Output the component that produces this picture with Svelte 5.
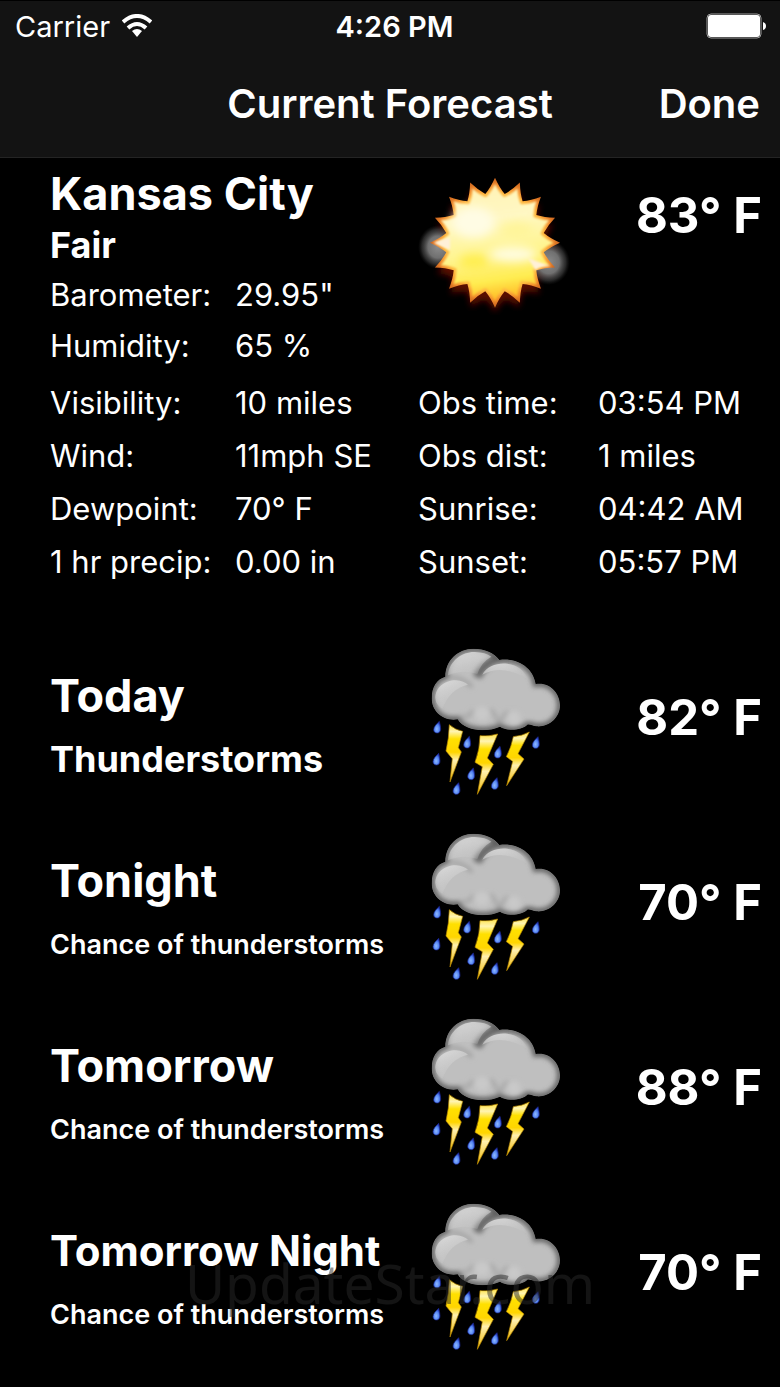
<script lang="ts">
  interface Reading {
    label: string;
    value: string;
  }

  interface Period {
    name: string;
    summary: string;
    temp: number;
  }

  const air: Reading[] = [
    { label: 'Barometer:', value: '29.95"' },
    { label: 'Humidity:', value: '65 %' }
  ];

  const ground: Reading[] = [
    { label: 'Visibility:', value: '10 miles' },
    { label: 'Wind:', value: '11mph SE' },
    { label: 'Dewpoint:', value: '70° F' },
    { label: '1 hr precip:', value: '0.00 in' }
  ];

  const station: Reading[] = [
    { label: 'Obs time:', value: '03:54 PM' },
    { label: 'Obs dist:', value: '1 miles' },
    { label: 'Sunrise:', value: '04:42 AM' },
    { label: 'Sunset:', value: '05:57 PM' }
  ];

  const periods: Period[] = [
    { name: 'Today', summary: 'Thunderstorms', temp: 82 },
    { name: 'Tonight', summary: 'Chance of thunderstorms', temp: 70 },
    { name: 'Tomorrow', summary: 'Chance of thunderstorms', temp: 88 },
    { name: 'Tomorrow Night', summary: 'Chance of thunderstorms', temp: 70 }
  ];

  const drops = [
    [82, 292], [172, 337], [80, 388], [140, 476],
    [184, 432], [264, 367], [255, 461], [378, 338]
  ];

  const cloud =
    'M106 140C106 90 145 56 190 56C225 56 252 68 268 90C325 82 370 115 377 162' +
    'C420 155 450 190 450 226C450 265 415 292 380 289C368 288 360 282 352 284' +
    'C335 302 290 304 270 290C230 308 165 305 143 268C100 275 65 245 65 205C65 170 80 148 106 140Z';

  // Sixteen-pointed star with slightly hollow edges
  function sunPath(tip: number, mid: number, valley: number) {
    const at = (r: number, turn: number) => {
      const a = (turn / 16) * Math.PI * 2 - Math.PI / 2;
      return `${(285 + r * Math.cos(a)).toFixed(1)} ${(233 + r * Math.sin(a)).toFixed(1)}`;
    };
    let d = `M${at(tip, 0)}`;
    for (let i = 0; i < 16; i++) {
      d += `Q${at(mid, i + 0.2)} ${at(valley, i + 0.5)}`;
      d += `Q${at(mid, i + 0.8)} ${at(tip, i + 1)}`;
    }
    return d + 'Z';
  }
</script>

{#snippet readings(items: Reading[], kind: string)}
  <dl class="readings {kind}">
    {#each items as item}
      <dt>{item.label}</dt>
      <dd>{item.value}</dd>
    {/each}
  </dl>
{/snippet}

<!-- Shared storm drawing, used once per forecast period -->
<svg class="sprite" aria-hidden="true">
  <defs>
    <linearGradient id="bolt" x1="0" y1="0" x2="0" y2="1">
      <stop offset="0" stop-color="#ffe34a" />
      <stop offset="0.12" stop-color="#fff4b0" />
      <stop offset="0.25" stop-color="#ffe000" />
      <stop offset="0.48" stop-color="#ffd500" />
      <stop offset="0.62" stop-color="#fff0b0" />
      <stop offset="1" stop-color="#f0b800" />
    </linearGradient>
    <radialGradient id="drop" cx="0.45" cy="0.65" r="0.6">
      <stop offset="0" stop-color="#8fb8ff" />
      <stop offset="0.6" stop-color="#5485f2" />
      <stop offset="1" stop-color="#2438b8" />
    </radialGradient>
    <linearGradient id="shine" x1="0.2" y1="0" x2="0.7" y2="1">
      <stop offset="0" stop-color="#dadada" />
      <stop offset="1" stop-color="#c4c4c4" stop-opacity="0.2" />
    </linearGradient>
    <filter id="soft" x="-20%" y="-20%" width="140%" height="140%">
      <feGaussianBlur stdDeviation="8" />
    </filter>
    <filter id="softer"><feGaussianBlur stdDeviation="2" /></filter>
    <clipPath id="cloud-shape"><path d={cloud} /></clipPath>
  </defs>
  <symbol id="storm" viewBox="24 45 456 459">
    <g clip-path="url(#cloud-shape)">
      <path d={cloud} fill="#bfbfbf" />
      <g filter="url(#soft)" fill="none">
        <path d="M104 142Q160 138 186 172" stroke="#9c9c9c" stroke-width="10" />
        <path d="M202 142Q216 100 272 84" stroke="#686868" stroke-width="26" />
        <path d="M140 262Q180 266 190 240M240 238Q262 256 266 292Q276 254 296 246" stroke="#a4a4a4" stroke-width="10" />
        <path d={cloud} stroke="#5c5c5c" stroke-width="17" />
      </g>
      <g fill="url(#shine)" filter="url(#softer)">
        <path d="M114 136C118 92 158 65 194 66Q226 67 244 80Q214 96 202 132Q160 116 114 136Z" />
        <path d="M217 134C230 108 262 98 292 101Q338 108 354 148Q276 100 217 134Z" />
        <path d="M76 205C76 170 108 150 138 151Q162 153 174 164Q120 176 97 236Q78 226 76 205Z" />
      </g>
      <g filter="url(#soft)" fill="#c9c9c9">
        <circle cx="216" cy="252" r="22" />
        <circle cx="312" cy="264" r="20" />
      </g>
    </g>
    <g fill="url(#bolt)" stroke="#b98a00" stroke-width="2" stroke-linejoin="round">
      <path d="M118 284Q136 300 158 304L145 353L154 366L120 456L127 386L108 363Q117 325 118 284Z" />
      <path d="M210 317Q238 320 263 312L232 384L250 403L202 493L217 410L195 397Q210 357 210 317Z" />
      <path d="M310 320Q336 318 358 306L324 371L342 387L290 467L308 394L289 380Q304 352 310 320Z" />
    </g>
    {#each drops as [x, y]}
      <path
        transform="translate({x} {y})"
        d="M6 -18C-2 -10 -11 -2 -11 7C-11 14 -6 17 0 17C6 17 10 12 10 5Q10 -4 6 -18Z"
        fill="url(#drop)"
        stroke="#1a2690"
        stroke-width="2"
      />
    {/each}
  </symbol>
</svg>

<div class="screen">
  <header>
    <div class="status">
      <div class="carrier">
        <span>Carrier</span>
        <svg width="30" height="24" viewBox="0 0 30 24" aria-hidden="true">
          <g fill="none" stroke="#fff" stroke-width="4">
            <path d="M1 8Q15 -4 29 8" />
            <path d="M6 14Q15 6 24 14" />
          </g>
          <path d="M10 17Q15 13 20 17L15 23Z" fill="#fff" />
        </svg>
      </div>
      <time>4:26 PM</time>
      <svg class="battery" width="60" height="26" viewBox="0 0 60 26" aria-hidden="true">
        <rect x="1" y="1" width="54" height="24" rx="4" fill="#111" stroke="#a0a0a0" stroke-width="1" />
        <rect x="2" y="2" width="52" height="22" rx="3" fill="#fff" />
        <path d="M57 9Q60 10 60 13Q60 16 57 17Z" fill="#fff" />
      </svg>
    </div>
    <nav>
      <h1>Current Forecast</h1>
      <button type="button">Done</button>
    </nav>
  </header>

  <main>
    <section class="current">
      <div class="columns">
        <div>
          <h2>Kansas City</h2>
          <p class="summary large">Fair</p>
          {@render readings(air, 'air')}
        </div>
        <svg class="sun" viewBox="54 30 456 420" role="img" aria-label="Fair">
          <defs>
            <radialGradient id="rays" cx="0.5" cy="0.5" r="0.5">
              <stop offset="0.76" stop-color="#ffb840" />
              <stop offset="0.88" stop-color="#f08a2c" />
              <stop offset="1" stop-color="#c8601c" />
            </radialGradient>
            <linearGradient id="disc" x1="0.4" y1="0" x2="0.55" y2="1">
              <stop offset="0" stop-color="#fff2b4" />
              <stop offset="0.3" stop-color="#fff8c4" />
              <stop offset="0.6" stop-color="#fff48e" />
              <stop offset="0.82" stop-color="#ffec50" />
              <stop offset="1" stop-color="#ffb41e" />
            </linearGradient>
            <radialGradient id="puff">
              <stop offset="0" stop-color="#8c8c8c" />
              <stop offset="0.5" stop-color="#707070" />
              <stop offset="0.8" stop-color="#444" stop-opacity="0.6" />
              <stop offset="1" stop-color="#222" stop-opacity="0" />
            </radialGradient>
            <filter id="glow" x="-20%" y="-20%" width="140%" height="140%">
              <feGaussianBlur stdDeviation="9" />
            </filter>
            <filter id="haze" x="-50%" y="-50%" width="200%" height="200%">
              <feGaussianBlur stdDeviation="14" />
            </filter>
            <filter id="edge"><feGaussianBlur stdDeviation="3" /></filter>
          </defs>
          <path d={sunPath(188, 164, 154)} transform="translate(0 20)" fill="#5a0a00" filter="url(#glow)" />
          <ellipse cx="114" cy="246" rx="60" ry="66" fill="url(#puff)" />
          <ellipse cx="446" cy="292" rx="64" ry="68" fill="url(#puff)" />
          <path d={sunPath(195, 166, 149)} fill="url(#rays)" />
          <path d={sunPath(176, 150, 139)} fill="url(#disc)" filter="url(#edge)" />
          <g filter="url(#haze)">
            <ellipse cx="220" cy="172" rx="64" ry="46" fill="#fffce4" />
            <ellipse cx="340" cy="268" rx="70" ry="22" fill="#fffce0" />
            <ellipse cx="350" cy="196" rx="50" ry="24" fill="#fff59a" />
            <ellipse cx="222" cy="290" rx="44" ry="22" fill="#ffee50" />
          </g>
          <path d="M100 233Q130 222 150 218L150 254Q130 246 100 233ZM385 280L454 304Q420 302 406 316Z" fill="#fff0d8" filter="url(#edge)" />
        </svg>
        <p class="temp">83° F</p>
      </div>
      <div class="details">
        {@render readings(ground, 'ground')}
        {@render readings(station, 'station')}
      </div>
    </section>

    {#each periods as period}
      <section class="columns period">
        <div>
          <h2 class:long={period.name.length > 10}>{period.name}</h2>
          <p class="summary" class:large={period.summary.length < 16}>{period.summary}</p>
        </div>
        <svg class="storm" role="img" aria-label={period.summary}>
          <use href="#storm" />
        </svg>
        <p class="temp">{period.temp}° F</p>
      </section>
    {/each}
  </main>

  <span class="watermark">UpdateStar.com</span>
</div>

<style>
  :global(body) {
    margin: 0;
    background: #000;
  }

  .sprite {
    position: absolute;
    width: 0;
    height: 0;
  }

  .screen {
    position: relative;
    padding-bottom: 18px;
    overflow: hidden;
    background: #000;
    color: #fff;
    font-family: Inter, "Liberation Sans", sans-serif;
    white-space: nowrap;
  }

  h1,
  h2,
  p,
  dl,
  dd {
    margin: 0;
  }

  header {
    background: #131313;
    border-top: 1px solid #000;
    border-bottom: 1px solid #242424;
  }

  .status,
  nav {
    display: grid;
    grid-template-columns: 1fr auto 1fr;
    align-items: center;
  }

  .status {
    height: 50px;
    padding: 0 14px 0 15px;
    font-size: 29px;
  }

  .carrier {
    display: flex;
    align-items: center;
    gap: 12px;
  }

  time {
    padding-left: 8px;
    font-weight: 600;
  }

  .battery {
    justify-self: end;
  }

  nav {
    height: 106px;
    padding: 0 20px;
  }

  h1 {
    grid-column: 2;
    font-size: 40px;
    font-weight: 600;
    line-height: 50px;
  }

  button {
    justify-self: end;
    padding: 0;
    border: 0;
    background: none;
    color: inherit;
    font: 600 40px/50px Inter, "Liberation Sans", sans-serif;
    cursor: pointer;
  }

  main {
    padding: 0 18px 0 50px;
  }

  .columns {
    display: grid;
    grid-template-columns: minmax(0, 368fr) minmax(0, 152fr) minmax(0, 192fr);
    align-items: start;
  }

  .current {
    padding: 8px 0 41px;
  }

  h2 {
    font-size: 45px;
    font-weight: 700;
    line-height: 56px;
  }

  .long {
    font-size: 42px;
  }

  .summary {
    font-size: 27px;
    font-weight: 600;
    line-height: 47px;
  }

  .large {
    font-size: 36px;
    font-weight: 700;
  }

  .temp {
    font-size: 49px;
    font-weight: 700;
    line-height: 60px;
    text-align: right;
  }

  .current .temp {
    padding-top: 20px;
  }

  .readings {
    display: grid;
    grid-template-columns: minmax(0, 185fr) minmax(0, 183fr);
    font-size: 31px;
    line-height: 53px;
  }

  .air {
    line-height: 51px;
  }

  .station {
    grid-template-columns: minmax(0, 180fr) minmax(0, 164fr);
  }

  .details {
    display: grid;
    grid-template-columns: minmax(0, 368fr) minmax(0, 344fr);
    padding-top: 5px;
  }

  .sun {
    width: 100%;
    max-width: 152px;
    margin-top: 9px;
  }

  .period {
    height: 185px;
  }

  .period h2 {
    padding-top: 39px;
  }

  .period .summary {
    padding-top: 12px;
  }

  .period .temp {
    padding-top: 59px;
  }

  .storm {
    width: 100%;
    max-width: 152px;
    height: 153px;
    margin-top: 16px;
  }

  .watermark {
    position: absolute;
    right: 0;
    bottom: 66px;
    left: 0;
    color: rgba(40, 40, 40, 0.5);
    font-family: "Noto Sans", sans-serif;
    font-size: 55px;
    line-height: 76px;
    text-align: center;
    pointer-events: none;
  }
</style>
